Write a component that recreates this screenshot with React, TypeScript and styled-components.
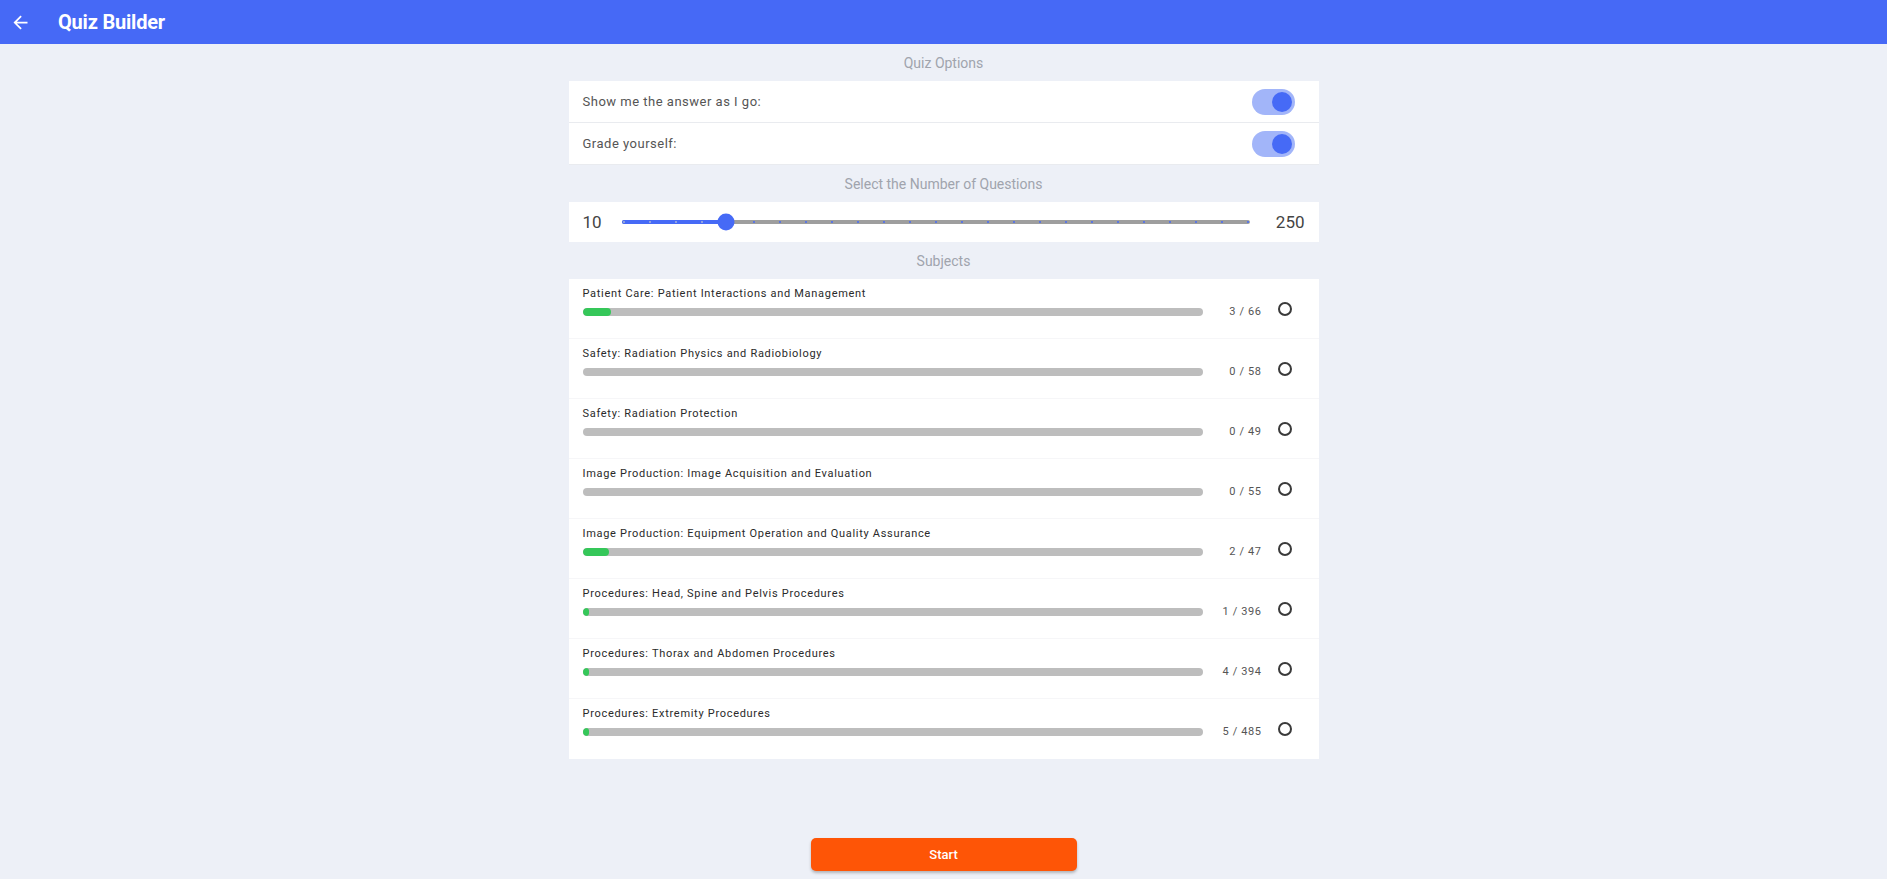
import React from 'react';
import styled, { createGlobalStyle } from 'styled-components';

const GlobalStyle = createGlobalStyle`
  html, body {
    margin: 0;
    padding: 0;
    background: #edf0f7;
    font-family: Roboto, "Liberation Sans", Arial, sans-serif;
  }
`;

const subjects = [
  { name: 'Patient Care: Patient Interactions and Management', done: 3, total: 66 },
  { name: 'Safety: Radiation Physics and Radiobiology', done: 0, total: 58 },
  { name: 'Safety: Radiation Protection', done: 0, total: 49 },
  { name: 'Image Production: Image Acquisition and Evaluation', done: 0, total: 55 },
  { name: 'Image Production: Equipment Operation and Quality Assurance', done: 2, total: 47 },
  { name: 'Procedures: Head, Spine and Pelvis Procedures', done: 1, total: 396 },
  { name: 'Procedures: Thorax and Abdomen Procedures', done: 4, total: 394 },
  { name: 'Procedures: Extremity Procedures', done: 5, total: 485 },
];

const MIN = 10;
const MAX = 250;
const STEP = 10;
const value = 50;

export default function App() {
  const steps = (MAX - MIN) / STEP;
  const pct = ((value - MIN) / (MAX - MIN)) * 100;

  return (
    <>
      <GlobalStyle />
      <StPage>
        <StHeader>
          <StBackBtn aria-label="back">
            <svg width="21" height="21" viewBox="0 0 24 24" fill="#fff">
              <path d="M20 11H7.83l5.59-5.59L12 4l-8 8 8 8 1.41-1.41L7.83 13H20v-2z" />
            </svg>
          </StBackBtn>
          <StTitle>Quiz Builder</StTitle>
        </StHeader>

        <StContent>
          <StSectionTitle>Quiz Options</StSectionTitle>
          <StPanel>
            <StOptionRow>
              <span>Show me the answer as I go:</span>
              <StToggle $on />
            </StOptionRow>
            <StOptionRow>
              <span>Grade yourself:</span>
              <StToggle $on />
            </StOptionRow>
          </StPanel>

          <StSectionTitle>Select the Number of Questions</StSectionTitle>
          <StPanel>
            <StSliderRow>
              <StSliderMin>{MIN}</StSliderMin>
              <StTrack>
                <StTrackFill style={{ width: `${pct}%` }} />
                <StTicks>
                  {Array.from({ length: steps + 1 }).map((_, i) => (
                    <StTick key={i} $active={i * STEP + MIN <= value} />
                  ))}
                </StTicks>
                <StThumb style={{ left: `${pct}%` }} />
              </StTrack>
              <StSliderMax>{MAX}</StSliderMax>
            </StSliderRow>
          </StPanel>

          <StSectionTitle>Subjects</StSectionTitle>
          <StPanel>
            {subjects.map((s) => (
              <StSubjectRow key={s.name}>
                <StSubjectMain>
                  <StSubjectName>{s.name}</StSubjectName>
                  <StBar>
                    {s.done > 0 && (
                      <StBarFill style={{ width: `${(s.done / s.total) * 100}%` }} />
                    )}
                  </StBar>
                </StSubjectMain>
                <StCount>
                  {s.done} / {s.total}
                </StCount>
                <StRadio />
              </StSubjectRow>
            ))}
          </StPanel>
        </StContent>

        <StStartButton>Start</StStartButton>
      </StPage>
    </>
  );
}

const StPage = styled.div`
  min-height: 100vh;
  display: flex;
  flex-direction: column;
  align-items: center;
`;

const StHeader = styled.header`
  align-self: stretch;
  height: 44px;
  background: #4669f6;
  display: flex;
  align-items: center;
  padding-left: 10px;
`;

const StBackBtn = styled.button`
  border: none;
  background: none;
  padding: 0;
  display: flex;
  align-items: center;
  cursor: pointer;
`;

const StTitle = styled.h1`
  margin: 0 0 0 27px;
  color: #fff;
  font-size: 20px;
  font-weight: 700;
  letter-spacing: -0.2px;
`;

const StContent = styled.main`
  width: 750px;
  display: flex;
  flex-direction: column;
`;

const StSectionTitle = styled.div`
  height: 37px;
  display: flex;
  align-items: center;
  justify-content: center;
  color: #a0a4ad;
  font-size: 14px;
`;

const StPanel = styled.section`
  background: #fff;
  display: flex;
  flex-direction: column;
`;

const StOptionRow = styled.div`
  height: 41px;
  display: flex;
  align-items: center;
  justify-content: space-between;
  padding: 0 24px 0 14px;
  border-bottom: 1px solid #e9ebef;
  color: #555;
  font-size: 13px;
  letter-spacing: 0.5px;
`;

const StToggle = styled.div<{ $on?: boolean }>`
  width: 43px;
  height: 26px;
  border-radius: 13px;
  background: ${(p) => (p.$on ? '#a2b5f9' : '#ccc')};
  display: flex;
  align-items: center;
  justify-content: ${(p) => (p.$on ? 'flex-end' : 'flex-start')};
  padding: 0 3px;
  box-sizing: border-box;

  &::after {
    content: '';
    width: 20px;
    height: 20px;
    border-radius: 50%;
    background: ${(p) => (p.$on ? '#466af6' : '#fff')};
  }
`;

const StSliderRow = styled.div`
  height: 40px;
  display: flex;
  align-items: center;
  padding: 0 14px;
  color: #444;
  font-size: 17px;
`;

const StSliderMin = styled.span`
  width: 39px;
`;

const StSliderMax = styled.span`
  width: 55px;
  text-align: right;
`;

const StTrack = styled.div`
  position: relative;
  flex: 1;
  height: 4px;
  border-radius: 2px;
  background: #9e9e9e;
`;

const StTrackFill = styled.div`
  height: 100%;
  border-radius: 2px;
  background: #466af6;
`;

const StTicks = styled.div`
  position: absolute;
  inset: 0 1px;
  display: flex;
  align-items: center;
  justify-content: space-between;
`;

const StTick = styled.span<{ $active: boolean }>`
  width: 2px;
  height: 2px;
  border-radius: 50%;
  background: ${(p) => (p.$active ? '#a8b4d8' : '#466af6')};
`;

const StThumb = styled.div`
  position: absolute;
  top: 50%;
  width: 17px;
  height: 17px;
  border-radius: 50%;
  background: #466af6;
  transform: translate(-50%, -50%);
`;

const StSubjectRow = styled.div`
  height: 60px;
  box-sizing: border-box;
  display: flex;
  align-items: flex-start;
  padding: 8px 27px 0 14px;
  border-bottom: 1px solid #f6f6f8;

  &:last-child {
    border-bottom: none;
  }
`;

const StSubjectMain = styled.div`
  width: 620px;
  display: flex;
  flex-direction: column;
  gap: 7px;
`;

const StSubjectName = styled.div`
  font-size: 11px;
  line-height: 14px;
  color: #2a2a2a;
  letter-spacing: 0.7px;
`;

const StBar = styled.div`
  height: 8px;
  border-radius: 4px;
  background: #bdbdbd;
  overflow: hidden;
`;

const StBarFill = styled.div`
  height: 100%;
  min-width: 6px;
  border-radius: 4px;
  background: #35c759;
`;

const StCount = styled.div`
  width: 59px;
  margin-top: 18px;
  text-align: right;
  font-size: 11px;
  line-height: 14px;
  color: #555;
  letter-spacing: 0.6px;
`;

const StRadio = styled.div`
  margin: 15px 0 0 16px;
  width: 14px;
  height: 14px;
  border: 2px solid #3a3a3a;
  border-radius: 50%;
  box-sizing: border-box;
`;

const StStartButton = styled.button`
  margin-top: 79px;
  width: 266px;
  height: 33px;
  border: none;
  border-radius: 5px;
  background: #fe5506;
  color: #fff;
  font-family: Roboto, "Liberation Sans", Arial, sans-serif;
  font-size: 13px;
  font-weight: 500;
  box-shadow: 0 2px 3px rgba(0, 0, 0, 0.25);
  cursor: pointer;
`;
